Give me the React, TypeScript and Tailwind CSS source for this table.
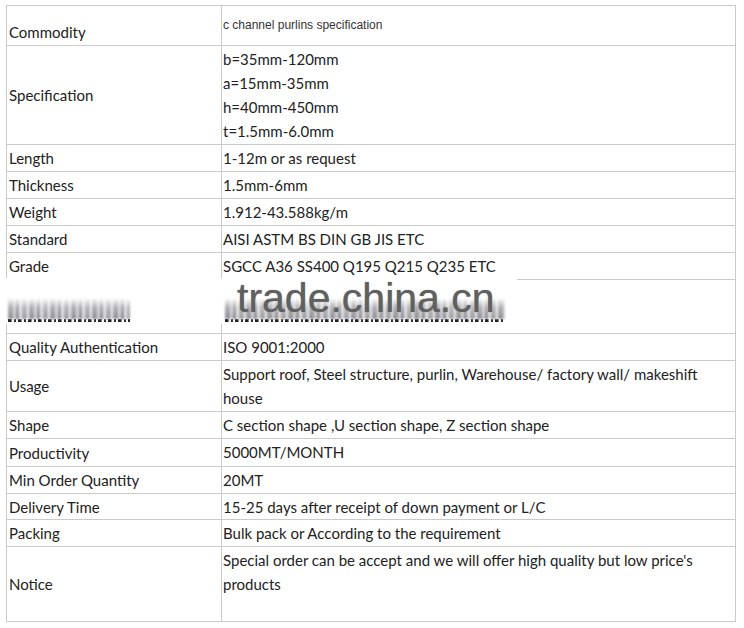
import React from 'react';

type Row = {
   label: string;
   value: React.ReactNode;
   h: string;
   labelAlign?: 'center' | 'end';
   small?: boolean;
};

const rows: Row[] = [
   { label: 'Commodity', value: 'c channel purlins specification', h: 'h-[40px]', labelAlign: 'end', small: true },
   {
      label: 'Specification',
      value: (
         <>
            b=35mm-120mm
            <br />
            a=15mm-35mm
            <br />
            h=40mm-450mm
            <br />
            t=1.5mm-6.0mm
         </>
      ),
      h: 'h-[99px]',
   },
   { label: 'Length', value: '1-12m or as request', h: 'h-[27px]' },
   { label: 'Thickness', value: '1.5mm-6mm', h: 'h-[27px]' },
   { label: 'Weight', value: '1.912-43.588kg/m', h: 'h-[27px]' },
   { label: 'Standard', value: 'AISI ASTM BS DIN GB JIS ETC', h: 'h-[27px]' },
   { label: 'Grade', value: 'SGCC A36 SS400 Q195 Q215 Q235 ETC', h: 'h-[27px]' },
];

const rows2: Row[] = [
   { label: 'Quality Authentication', value: 'ISO 9001:2000', h: 'h-[27px]' },
   {
      label: 'Usage',
      value: (
         <>
            Support roof, Steel structure, purlin, Warehouse/ factory wall/ makeshift
            <br />
            house
         </>
      ),
      h: 'h-[51px]',
   },
   { label: 'Shape', value: 'C section shape ,U section shape, Z section shape', h: 'h-[27px]' },
   { label: 'Productivity', value: '5000MT/MONTH', h: 'h-[28px]' },
   { label: 'Min Order Quantity', value: '20MT', h: 'h-[27px]' },
   { label: 'Delivery Time', value: '15-25 days after receipt of down payment or L/C', h: 'h-[26px]' },
   { label: 'Packing', value: 'Bulk pack or According to the requirement', h: 'h-[27px]' },
];

function TableRow({ row, last }: { row: Row; last?: boolean }) {
   return (
      <div className={`flex ${row.h} ${last ? '' : 'border-b border-[#cacaca]'}`}>
         <div
            className={`w-[215px] shrink-0 border-r border-[#cacaca] pl-[2px] flex ${
               row.labelAlign === 'end' ? 'items-end pb-[1px]' : 'items-center'
            }`}
         >
            <span className="leading-[24px]">{row.label}</span>
         </div>
         <div
            className={`flex-1 pl-[1px] ${
               row.small
                  ? "font-['Liberation_Sans',Arial,sans-serif] text-[12px] text-[#333] flex items-center pb-[2px]"
                  : 'pt-[1px] leading-[24px]'
            }`}
         >
            {row.value}
         </div>
      </div>
   );
}

// smeared remains of the text under the watermark
function Smear({ w }: { w: string }) {
   return (
      <div className={`${w} flex flex-col`}>
         <div className="h-[21px] blur-[1px] bg-[linear-gradient(to_bottom,#fff,rgba(255,255,255,0.3)_45%,rgba(255,255,255,0)),repeating-linear-gradient(90deg,#8e8e95_0_5px,#c8c8cd_5px_8px,#84848a_8px_11px,#dcdcdf_11px_14px,#9c9ca2_14px_19px,#ececee_19px_21px)]" />
         <div className="h-[3px] bg-[repeating-linear-gradient(90deg,#1c1c1c_0_3px,#8a8a8a_3px_4px,transparent_4px_6px,#2a2a2a_6px_8px,transparent_8px_10px)]" />
      </div>
   );
}

export default function App() {
   return (
      <div className="w-[744px] h-[628px] bg-white pt-[5px] pl-[6px] font-['Lato','Carlito',sans-serif] text-[15px] text-[#222]">
         <div className="w-[730px] border border-[#cacaca]">
            {rows.map((r) => (
               <TableRow key={r.label} row={r} />
            ))}

            <div className="relative flex h-[54px] border-b border-[#cacaca]">
               <div className="w-[215px] shrink-0 border-r border-[#cacaca]" />
               <div className="flex-1" />
               {/* trade.china.cn watermark over the row */}
               <div className="absolute left-[-2px] top-[-2px] w-[512px] h-[46px] bg-white">
                  <div className="flex gap-[95px] pl-[3px] pt-[20px]">
                     <Smear w="w-[122px]" />
                     <Smear w="w-[280px]" />
                  </div>
                  <div className="absolute left-[232px] top-0 font-['Liberation_Sans',Arial,sans-serif] text-[41px] leading-[41px] text-[#606060] [text-shadow:0_0_1px_#777]">
                     trade.china.cn
                  </div>
               </div>
            </div>

            {rows2.map((r) => (
               <TableRow key={r.label} row={r} />
            ))}
            <TableRow
               last
               row={{
                  label: 'Notice',
                  value: (
                     <>
                        Special order can be accept and we will offer high quality but low price's
                        <br />
                        products
                     </>
                  ),
                  h: 'h-[74px]',
               }}
            />
         </div>
      </div>
   );
}
